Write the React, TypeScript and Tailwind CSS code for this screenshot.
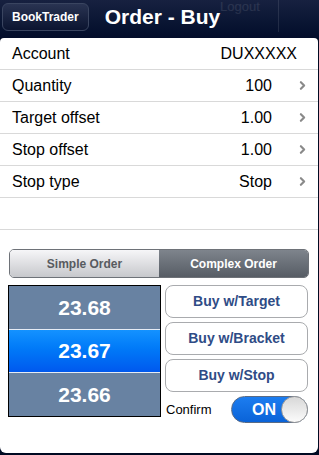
import { ChevronRight } from 'lucide-react';

const rows = [
  { label: 'Account', value: 'DUXXXXX', chevron: false },
  { label: 'Quantity', value: '100', chevron: true },
  { label: 'Target offset', value: '1.00', chevron: true },
  { label: 'Stop offset', value: '1.00', chevron: true },
  { label: 'Stop type', value: 'Stop', chevron: true },
];

const prices = ['23.68', '23.67', '23.66'];

export default function App() {
  return (
    <div
      className="w-[319px] h-[455px] overflow-hidden flex flex-col bg-[#000a22]"
      style={{ fontFamily: '"Liberation Sans", Arial, sans-serif' }}
    >
      {/* Nav bar */}
      <div className="relative h-[38px] shrink-0 flex items-center bg-gradient-to-b from-[#172140] to-[#030d2a] px-[2px]">
        <div className="absolute left-[220px] top-0 text-[13px] leading-[14px] text-white/10">Logout</div>
        <div className="absolute left-[278px] top-0 h-[32px] w-px bg-white/10" />
        <div className="h-[28px] mb-[4px] px-[9px] flex items-center rounded-[6px] border border-[#3a4560] bg-gradient-to-b from-[#2a3452] to-[#0b1430] text-white font-bold text-[12px]">
          BookTrader
        </div>
        <div className="ml-[16px] mb-[4px] text-white font-bold text-[21px]">Order - Buy</div>
      </div>

      {/* White panel */}
      <div className="flex-1 mb-[2px] mr-[1px] bg-white rounded-t-[4px] rounded-b-[6px] flex flex-col">
        {rows.map((r) => (
          <div key={r.label} className="h-[32px] shrink-0 flex items-center border-b border-[#d9d9d9] pl-[12px] pr-[9px]">
            <span className="text-[16px] text-black flex-1">{r.label}</span>
            <span className={`text-[16px] text-black ${r.chevron ? 'mr-[24px]' : 'mr-[12px]'}`}>{r.value}</span>
            {r.chevron && <ChevronRight className="w-[13px] h-[13px] text-[#8a8a8a]" strokeWidth={4} />}
          </div>
        ))}
        <div className="h-[32px] shrink-0 border-b border-[#d9d9d9]" />

        {/* Segmented control */}
        <div className="mt-[19px] mx-[9px] h-[29px] flex rounded-[5px] border border-[#6e7278] overflow-hidden">
          <div className="flex-1 flex items-center justify-center bg-gradient-to-b from-[#f6f6f8] to-[#c7c8cc] text-[#585b60] font-bold text-[12px]">
            Simple Order
          </div>
          <div className="flex-1 flex items-center justify-center bg-gradient-to-b from-[#7e848c] to-[#575d65] text-white font-bold text-[12px]">
            Complex Order
          </div>
        </div>

        <div className="mt-[7px] flex pl-[8px] pr-[10px] gap-[4px]">
          {/* Price picker */}
          <div className="w-[153px] h-[132px] border border-black bg-[#6882a2] flex flex-col">
            {prices.map((p, i) => (
              <div
                key={p}
                className={`flex-1 flex items-center justify-center text-white font-bold text-[21px] ${
                  i === 1
                    ? 'bg-gradient-to-b from-[#1492ff] to-[#0058ee] border-y border-[#e6ecf5]'
                    : ''
                }`}
              >
                {p}
              </div>
            ))}
          </div>

          {/* Buttons */}
          <div className="flex-1 flex flex-col gap-[4px]">
            {['Buy w/Target', 'Buy w/Bracket', 'Buy w/Stop'].map((b) => (
              <div
                key={b}
                className="h-[33px] rounded-[8px] border border-[#a9abae] bg-white flex items-center justify-center text-[#2f4c86] font-bold text-[14px]"
              >
                {b}
              </div>
            ))}
            <div className="flex items-center">
              <span className="text-[13px] text-black ml-[1px]">Confirm</span>
              <div className="ml-auto w-[77px] h-[27px] rounded-full border border-[#5a6b85] bg-gradient-to-b from-[#1c7df0] to-[#0a63d8] flex items-center relative">
                <span className="ml-[20px] text-white font-bold text-[16px]">ON</span>
                <div className="absolute right-[-1px] top-[-1px] w-[27px] h-[27px] rounded-full border border-[#9a9a9a] bg-gradient-to-b from-[#d8d8d8] to-[#fbfbfb]" />
              </div>
            </div>
          </div>
        </div>
      </div>
    </div>
  );
}
